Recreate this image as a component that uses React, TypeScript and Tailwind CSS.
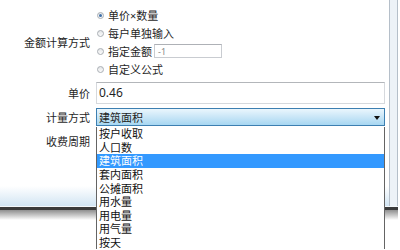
import React from 'react';

const RADIOS = ['单价×数量', '每户单独输入', '指定金额', '自定义公式'];
const OPTIONS = ['按户收取', '人口数', '建筑面积', '套内面积', '公摊面积', '用水量', '用电量', '用气量', '按天'];

function Radio({ checked }: { checked?: boolean }) {
  return (
    <span className="ml-[1px] flex h-[7px] w-[7px] flex-none items-center justify-center rounded-full border border-[#a9aeb4] bg-gradient-to-b from-[#e4e6e8] to-[#fbfbfb]">
      {checked && <span className="h-[3px] w-[3px] rounded-full bg-[#3d6fa8]" />}
    </span>
  );
}

export default function App() {
  return (
    <div className="relative h-[250px] w-[400px] overflow-hidden bg-white font-['Noto_Sans','Noto_Sans_CJK_SC',sans-serif] text-[11px] leading-none text-[#1f1f1f]">
      {/* dialog */}
      <div className="flex h-[220px] w-[398px] flex-col">
        <div className="flex h-[206px]">
          <div className="flex w-[389px] flex-col bg-white">
            {/* 金额计算方式 */}
            <div className="mt-[6px] flex">
              <div className="flex w-[90px] items-center justify-end">金额计算方式</div>
              <div className="ml-[6px] flex flex-col">
                {RADIOS.map((r, i) => (
                  <div key={r} className="flex h-[18px] items-center">
                    <Radio checked={i === 0} />
                    <span className="ml-[4px]">{r}</span>
                    {i === 2 && (
                      <span className="ml-[2px] flex h-[14px] w-[68px] items-center border border-[#c9ccd1] border-t-[#aeb1b6] bg-white pl-[3px] text-[9px] text-[#8a8a8a]">
                        -1
                      </span>
                    )}
                  </div>
                ))}
              </div>
            </div>

            {/* 单价 */}
            <div className="mt-[4px] flex">
              <div className="flex w-[90px] items-center justify-end">单价</div>
              <div className="ml-[6px] flex h-[22px] w-[289px] items-center border border-[#d6d9dd] border-t-[#b3b6ba] bg-white pl-[2px] text-[12px]">
                0.46
              </div>
            </div>

            {/* 计量方式 */}
            <div className="mt-[4px] flex">
              <div className="flex w-[90px] items-center justify-end">计量方式</div>
              <div className="relative ml-[6px] flex h-[18px] w-[289px] items-center border border-[#3c7fb1] bg-gradient-to-b from-[#eaf6fd] via-[#c9e6f7] to-[#a7d7f2] pl-[2px]">
                建筑面积
                <svg className="absolute right-[4px] top-[7px]" width="6" height="4" viewBox="0 0 6 4">
                  <path d="M0 0H6L3 4Z" fill="#111" />
                </svg>
              </div>
            </div>

            {/* 收费周期 */}
            <div className="mt-[4px] flex">
              <div className="flex h-[22px] w-[90px] items-center justify-end">收费周期</div>
            </div>

            {/* bottom panel gradient */}
            <div className="mt-auto h-[20px] bg-gradient-to-b from-white to-[#d2e5f3]" />
          </div>
          {/* right frame */}
          <div className="w-[9px] border-x border-[#b5bfc9] bg-[#edf2f7]" />
        </div>
        <div className="h-[1px] bg-[#f4f8fb]" />
        <div className="h-[3px] bg-[#3b3b3b]" />
        <div className="flex-1 bg-gradient-to-b from-[#8f8f8f] to-white" />
      </div>

      {/* open dropdown list */}
      <div className="absolute left-[96px] top-[127px] w-[289px] border-x border-[#646464] bg-white text-[11px] text-[#111]">
        {OPTIONS.map((o, i) => (
          <div
            key={o}
            className={`flex h-[13.6px] items-center pl-[2px] ${i === 2 ? 'bg-[#3399ff] text-white' : ''}`}
          >
            {o}
          </div>
        ))}
      </div>
    </div>
  );
}
